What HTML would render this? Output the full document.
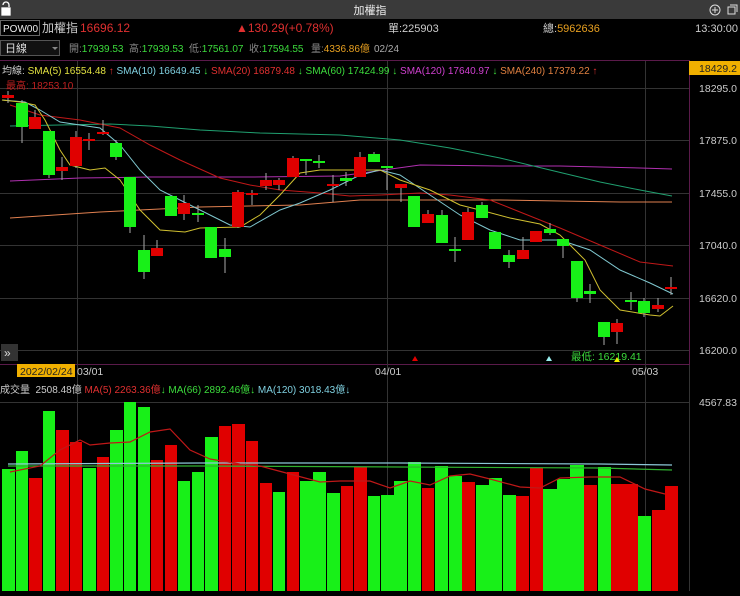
<!DOCTYPE html>
<html><head><meta charset="utf-8"><style>
body{margin:0;width:740px;height:591px;background:#000;overflow:hidden;font-family:"Liberation Sans","Noto Sans CJK TC",sans-serif;}
svg text{font-family:"Liberation Sans","Noto Sans CJK TC",sans-serif;}
</style></head><body>
<svg width="740" height="591" xmlns="http://www.w3.org/2000/svg">
<rect x="0" y="0" width="740" height="19" fill="#3a3a3a"/>
<g stroke="#fff" stroke-width="1.3" fill="none"><path d="M3 5 a3 3 0 0 1 6 0 v2"/><rect x="2" y="8" width="8" height="7" fill="#fff"/></g>
<text x="370" y="14" fill="#eee" font-size="11" text-anchor="middle">加權指</text>
<circle cx="715" cy="10" r="5" stroke="#ddd" fill="none"/><path d="M712 10h6M715 7v6" stroke="#ddd"/>
<rect x="728" y="7" width="7" height="7" stroke="#ddd" fill="none"/><path d="M730 5h7v7" stroke="#ddd" fill="none"/>
<rect x="0.5" y="20.5" width="39" height="15" fill="#000" stroke="#666"/>
<text x="3" y="32" fill="#eee" font-size="10">POW00</text>
<text x="42" y="32" fill="#ccc" font-size="12">加權指</text>
<text x="80" y="32" fill="#e03030" font-size="12">16696.12</text>
<text x="236" y="32" fill="#e03030" font-size="12">▲130.29(+0.78%)</text>
<text x="388" y="32" fill="#ccc" font-size="11">單:225903</text>
<text x="543" y="32" fill="#ccc" font-size="11">總:<tspan fill="#e8a020">5962636</tspan></text>
<text x="738" y="32" fill="#ccc" font-size="11" text-anchor="end">13:30:00</text>
<rect x="0.5" y="40.5" width="59" height="15" fill="#111" stroke="#555"/>
<text x="5" y="52" fill="#ddd" font-size="11">日線</text>
<path d="M52 47l3 3 3-3z" fill="#888"/>
<g font-size="10"><text x="69" y="52" fill="#888">開:<tspan fill="#3cdc3c">17939.53</tspan></text>
<text x="129" y="52" fill="#888">高:<tspan fill="#3cdc3c">17939.53</tspan></text>
<text x="189" y="52" fill="#888">低:<tspan fill="#3cdc3c">17561.07</tspan></text>
<text x="249" y="52" fill="#888">收:<tspan fill="#3cdc3c">17594.55</tspan></text>
<text x="311" y="52" fill="#888">量:<tspan fill="#e8a020">4336.86億</tspan></text>
<text x="374" y="52" fill="#aaa">02/24</text></g>
<!-- main chart frame -->
<path d="M0 60.5H689.5V364.5H0" stroke="#5a1a4a" fill="none"/>
<g stroke="#333" stroke-width="1"><path d="M0 88.5H689M0 140.5H689M0 193.5H689M0 245.5H689M0 298.5H689M0 350.5H689"/><path d="M77.5 61V591M387.5 61V591M645.5 61V591"/></g>
<rect x="689" y="61" width="51" height="14" fill="#f0b000"/>
<g font-size="10.5" fill="#ccc" text-anchor="end"><text x="737" y="72" fill="#222">18429.2</text>
<text x="737" y="92">18295.0</text><text x="737" y="144">17875.0</text><text x="737" y="197">17455.0</text><text x="737" y="249">17040.0</text><text x="737" y="302">16620.0</text><text x="737" y="354">16200.0</text></g>
<g font-size="10"><text x="2" y="74" fill="#ccc">均線: <tspan fill="#e0e040">SMA(5) 16554.48</tspan> <tspan fill="#e03030">↑</tspan> <tspan fill="#7fd0e0">SMA(10) 16649.45</tspan> <tspan fill="#3cdc3c">↓</tspan> <tspan fill="#e03030">SMA(20) 16879.48</tspan> <tspan fill="#3cdc3c">↓ SMA(60) 17424.99 ↓</tspan> <tspan fill="#d040d0">SMA(120) 17640.97</tspan> <tspan fill="#3cdc3c">↓</tspan> <tspan fill="#e08040">SMA(240) 17379.22</tspan> <tspan fill="#e03030">↑</tspan></text>
<text x="6" y="89" fill="#c02020">最高: 18253.10</text></g>
<!-- MAs -->
<g fill="none" stroke-width="1">
<polyline stroke="#e08050" points="10,218 100,212 200,207 300,205 360,200 440,200 500,200 560,201 620,202 672,202"/>
<polyline stroke="#b030b0" points="10,181 80,178 150,177 250,177 340,176 420,165 500,166 560,166 640,168 672,169"/>
<polyline stroke="#20a070" points="10,126 60,125 110,124 150,126 200,130 260,133 340,135 400,140 450,148 500,158 550,170 600,182 640,190 672,196"/>
<polyline stroke="#c01818" points="10,105 40,115 80,120 120,128 150,145 180,160 220,178 250,185 280,190 320,193 350,196 380,195 420,193 450,195 490,200 520,212 560,228 600,245 640,262 673,266"/>
<polyline stroke="#80c8d0" points="2,100 25,102 40,110 60,122 80,125 100,128 120,145 140,170 160,190 180,200 200,210 230,225 250,227 280,210 300,203 330,190 360,175 380,170 400,175 430,195 460,215 490,230 520,240 560,240 590,250 620,270 650,283 673,294"/>
<polyline stroke="#d0c030" points="2,100 20,102 35,105 45,120 60,150 70,165 90,170 105,168 120,180 140,210 160,230 185,232 200,228 240,227 260,215 280,195 300,173 320,170 365,170 380,170 400,180 430,190 460,205 480,210 510,218 540,224 560,235 585,260 600,290 620,310 650,315 660,316 673,306"/>
</g>
<!-- candles -->
<g stroke="#aaa" stroke-width="1">
<path d="M8 91V103M22 100V143M35 110V129M49 131V178M62 157V180M76 131V168M89 133V150M103 120V135M116 140V160M130 177V233M144 235V279M157 240V256M171 196V216M184 195V220M198 205V222M211 227V258M225 238V273M238 190V228M252 190V205M266 173V190M279 178V190M293 156V177M306 160V175M319 155V168M333 175V202M346 172V186M360 152V177M374 152V162M387 167V190M401 184V202M414 196V227M428 210V223M442 210V243M455 237V262M468 208V240M482 202V218M495 232V249M509 250V268M523 237V259M536 231V242M550 223V235M563 239V258M577 261V302M590 284V303M604 322V345M617 319V344M631 292V310M644 298V317M658 298V312M671 277V295"/>
</g>
<g fill="#e00000">
<rect x="2" y="95" width="12" height="3"/><rect x="29" y="117" width="12" height="12"/><rect x="56" y="167" width="12" height="4"/><rect x="70" y="137" width="12" height="29"/><rect x="83" y="139" width="12" height="2"/><rect x="97" y="132" width="12" height="2"/><rect x="151" y="248" width="12" height="8"/><rect x="178" y="203" width="12" height="11"/><rect x="232" y="192" width="12" height="35"/><rect x="246" y="193" width="12" height="2"/><rect x="260" y="180" width="12" height="6"/><rect x="273" y="180" width="12" height="5"/><rect x="287" y="158" width="12" height="19"/><rect x="327" y="184" width="12" height="2"/><rect x="354" y="157" width="12" height="20"/><rect x="395" y="184" width="12" height="4"/><rect x="422" y="214" width="12" height="9"/><rect x="462" y="212" width="12" height="28"/><rect x="517" y="250" width="12" height="9"/><rect x="530" y="231" width="12" height="11"/><rect x="611" y="323" width="12" height="9"/><rect x="652" y="305" width="12" height="4"/><rect x="665" y="287" width="12" height="2"/>
</g>
<g fill="#18f018">
<rect x="16" y="103" width="12" height="24"/><rect x="43" y="131" width="12" height="44"/><rect x="110" y="143" width="12" height="14"/><rect x="124" y="177" width="12" height="50"/><rect x="138" y="250" width="12" height="22"/><rect x="165" y="196" width="12" height="20"/><rect x="192" y="213" width="12" height="2"/><rect x="205" y="227" width="12" height="31"/><rect x="219" y="249" width="12" height="8"/><rect x="300" y="159" width="12" height="2"/><rect x="313" y="161" width="12" height="2"/><rect x="340" y="178" width="12" height="3"/><rect x="368" y="154" width="12" height="8"/><rect x="381" y="166" width="12" height="2"/><rect x="408" y="196" width="12" height="31"/><rect x="436" y="215" width="12" height="28"/><rect x="449" y="249" width="12" height="2"/><rect x="476" y="205" width="12" height="13"/><rect x="489" y="232" width="12" height="17"/><rect x="503" y="255" width="12" height="7"/><rect x="544" y="229" width="12" height="4"/><rect x="557" y="239" width="12" height="7"/><rect x="571" y="261" width="12" height="37"/><rect x="584" y="291" width="12" height="3"/><rect x="598" y="322" width="12" height="15"/><rect x="625" y="300" width="12" height="2"/><rect x="638" y="301" width="12" height="12"/>
</g>
<text x="571" y="360" fill="#3cdc3c" font-size="10.5">最低: 16219.41</text>
<path d="M412 361l3-5 3 5z" fill="#e00000"/><path d="M546 361l3-5 3 5z" fill="#9ee"/><path d="M614 362l3-5 3 5z" fill="#ee0"/>
<rect x="1" y="344" width="17" height="17" fill="#333"/><text x="4" y="357" fill="#ddd" font-size="12">»</text>
<!-- date axis -->
<rect x="0" y="365" width="689" height="14" fill="#000"/>
<path d="M77.5 365V591M387.5 365V591M645.5 365V591" stroke="#333"/>
<rect x="17" y="364" width="58" height="13" fill="#f0b000"/>
<g font-size="10.5"><text x="20" y="375" fill="#222">2022/02/24</text><text x="77" y="375" fill="#ccc">03/01</text><text x="375" y="375" fill="#ccc">04/01</text><text x="632" y="375" fill="#ccc">05/03</text></g>
<path d="M689.5 365V591" stroke="#333"/>
<!-- volume -->
<g font-size="10"><text x="0" y="393" fill="#ccc">成交量 &#160;2508.48億 <tspan fill="#e03030">MA(5) 2263.36億</tspan><tspan fill="#3cdc3c">↓ MA(66) 2892.46億↓</tspan> <tspan fill="#7fd0e0">MA(120) 3018.43億↓</tspan></text></g>
<path d="M0 402.5H689" stroke="#333"/>
<text x="737" y="406" fill="#ccc" font-size="10.5" text-anchor="end">4567.83</text>
<g fill="#18f018">
<rect x="2" y="469" width="13" height="122"/><rect x="16" y="451" width="12" height="140"/><rect x="43" y="411" width="12" height="180"/><rect x="83" y="468" width="13" height="123"/><rect x="110" y="430" width="13" height="161"/><rect x="124" y="402" width="12" height="189"/><rect x="138" y="407" width="12" height="184"/><rect x="178" y="481" width="12" height="110"/><rect x="192" y="472" width="12" height="119"/><rect x="205" y="437" width="13" height="154"/><rect x="273" y="492" width="12" height="99"/><rect x="300" y="481" width="13" height="110"/><rect x="313" y="472" width="13" height="119"/><rect x="327" y="493" width="13" height="98"/><rect x="368" y="496" width="12" height="95"/><rect x="381" y="495" width="13" height="96"/><rect x="394" y="481" width="13" height="110"/><rect x="408" y="462" width="13" height="129"/><rect x="435" y="466" width="13" height="125"/><rect x="449" y="476" width="13" height="115"/><rect x="476" y="485" width="13" height="106"/><rect x="489" y="478" width="13" height="113"/><rect x="503" y="495" width="13" height="96"/><rect x="543" y="489" width="14" height="102"/><rect x="557" y="479" width="13" height="112"/><rect x="570" y="465" width="14" height="126"/><rect x="598" y="467" width="13" height="124"/><rect x="638" y="516" width="13" height="75"/>
</g>
<g fill="#e00000">
<rect x="29" y="478" width="13" height="113"/><rect x="56" y="430" width="13" height="161"/><rect x="70" y="442" width="12" height="149"/><rect x="97" y="457" width="12" height="134"/><rect x="151" y="460" width="12" height="131"/><rect x="165" y="445" width="12" height="146"/><rect x="219" y="426" width="12" height="165"/><rect x="232" y="424" width="13" height="167"/><rect x="246" y="441" width="12" height="150"/><rect x="260" y="483" width="12" height="108"/><rect x="287" y="472" width="12" height="119"/><rect x="341" y="486" width="12" height="105"/><rect x="354" y="467" width="13" height="124"/><rect x="422" y="488" width="12" height="103"/><rect x="462" y="482" width="13" height="109"/><rect x="516" y="496" width="13" height="95"/><rect x="530" y="468" width="13" height="123"/><rect x="584" y="485" width="13" height="106"/><rect x="611" y="484" width="13" height="107"/><rect x="624" y="484" width="14" height="107"/><rect x="652" y="510" width="13" height="81"/><rect x="665" y="486" width="13" height="105"/>
</g>
<g fill="none" stroke-width="1.2">
<polyline stroke="#8cc8d8" points="8,464 200,463 400,463 600,464 672,465"/>
<polyline stroke="#30b030" points="8,466 200,466 400,467 600,468 672,470"/>
<polyline stroke="#c01818" points="10,472 40,466 60,450 80,440 90,445 110,443 130,442 150,432 170,429 190,450 210,459 240,464 260,466 290,474 320,482 340,481 370,481 390,488 410,481 430,485 450,476 470,474 490,479 520,487 540,488 560,478 590,477 620,477 645,489 665,494"/>
</g>
</svg>
</body></html>
